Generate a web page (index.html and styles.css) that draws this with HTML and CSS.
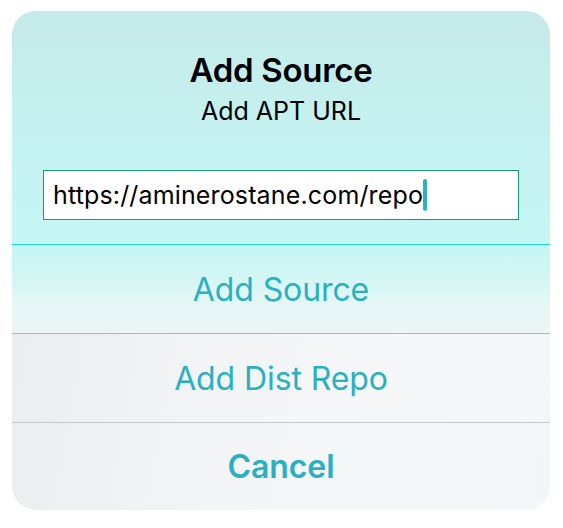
FILE: index.html
```html
<!DOCTYPE html>
<html>
<head>
<meta charset="utf-8">
<link rel="stylesheet" href="styles.css">
</head>
<body>
<div class="alert">
  <div class="header">
    <div class="title">Add Source</div>
    <div class="message">Add APT URL</div>
    <div class="field"><span class="value">https://aminerostane.com/repo</span><span class="caret"></span></div>
  </div>
  <div class="action action-first">Add Source</div>
  <div class="action">Add Dist Repo</div>
  <div class="action action-cancel">Cancel</div>
</div>
</body>
</html>
```
FILE: styles.css
```css
html, body {
  margin: 0;
  padding: 0;
  background: #ffffff;
}
body {
  font-family: Inter, "Noto Sans", "Liberation Sans", sans-serif;
  padding: 11px 13px 0 12px;
}
.alert {
  width: 538px;
  height: 499px;
  border-radius: 24px;
  overflow: hidden;
  display: flex;
  flex-direction: column;
  background: linear-gradient(100deg, #e9eaec 0%, #f2f3f5 35%, #f6f7f8 70%, #f3f6f8 100%);
}
.header {
  height: 234px;
  flex: none;
  box-sizing: border-box;
  border-bottom: 1px solid #16dcdc;
  background: linear-gradient(180deg, #c4eae9 0%, #c5f3f1 60%, #c5f7f4 100%);
  display: flex;
  flex-direction: column;
  align-items: center;
  padding-top: 39px;
}
.title {
  font-size: 33px;
  font-weight: 600;
  color: #000;
  line-height: 40px;
  letter-spacing: -0.3px;
}
.message {
  font-size: 25px;
  color: #000;
  line-height: 32px;
  margin-top: 5px;
}
.field {
  align-self: stretch;
  margin: 43px 31px 0 31px;
  height: 50px;
  box-sizing: border-box;
  border: 1px solid #16977a;
  background: #fff;
  display: flex;
  align-items: center;
  padding-left: 9px;
}
.value {
  font-size: 25px;
  color: #000;
  letter-spacing: 0.15px;
}
.caret {
  width: 4px;
  height: 32px;
  background: #2ab3c3;
  border-radius: 2px;
  margin-left: 0;
}
.action {
  height: 89px;
  flex: none;
  box-sizing: border-box;
  border-top: 1px solid #c6c8cd;
  display: flex;
  align-items: center;
  justify-content: center;
  font-size: 32px;
  color: #2ab0c0;
  letter-spacing: -0.1px;
}
.action-first {
  border-top: none;
  height: 88px;
  background: linear-gradient(180deg, #c5f7f4 0%, #d2f6f4 35%, #e6f7f6 70%, #ecf5f5 100%);
}
.action-first + .action {
  border-top-color: #aab8bb;
}
.action-cancel {
  height: 88px;
  font-weight: 600;
}
```
